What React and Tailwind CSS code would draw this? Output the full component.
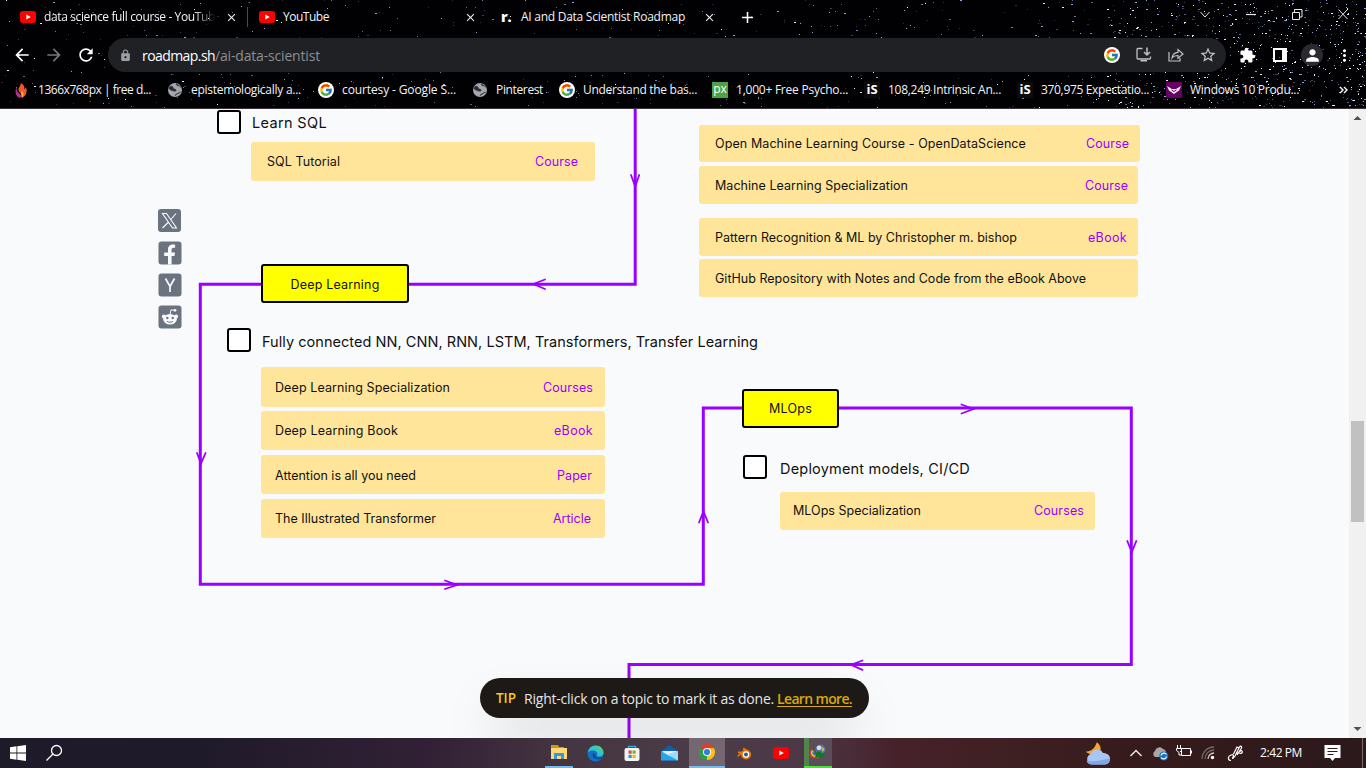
import React, { useLayoutEffect, useRef } from "react";
import {
  MdArrowBack, MdArrowForward, MdRefresh, MdLock, MdPublic, MdClose, MdAdd,
  MdStarBorder, MdExtension, MdPerson, MdMoreVert,
} from "react-icons/md";
import { FcGoogle } from "react-icons/fc";

/* Text run whose letter spacing is adjusted so that it spans `w` pixels. */
function Fit({ w, className = "", children }) {
  const ref = useRef(null);
  useLayoutEffect(() => {
    const el = ref.current;
    el.style.letterSpacing = "0px";
    const n = el.textContent.length;
    el.style.letterSpacing = `${(w - el.getBoundingClientRect().width) / n}px`;
  }, [w]);
  return <span ref={ref} className={`inline-block shrink-0 whitespace-pre ${className}`}>{children}</span>;
}

function makeStars() {
  let s = 90210;
  const rnd = () => {
    s = (s * 1664525 + 1013904223) % 4294967296;
    return s / 4294967296;
  };
  const tones = ["#e8eef8", "#8fa6d6", "#56678f", "#3a4258", "#2a2d3c", "#6f7fae", "#2d3142"];
  const out = [];
  for (let i = 0; i < 1900; i++) {
    const x = Math.floor(rnd() * 1366);
    const y = Math.floor(rnd() * 108);
    const keep = x < 900 ? 0.38 : 0.38 + ((x - 900) / 466) * 0.62;
    const t = rnd();
    const bright = rnd();
    if (t > keep) continue;
    const c = bright < (x > 1100 ? 0.3 : 0.08) ? tones[0] : tones[1 + Math.floor(rnd() * 6)];
    out.push({ x, y, w: rnd() > 0.82 ? 2 : 1, c });
  }
  for (let i = 0; i < 480; i++) {
    const x = 1366 - Math.floor(Math.pow(rnd(), 1.5) * 260);
    const y = Math.floor(rnd() * 108);
    out.push({ x, y, w: rnd() > 0.75 ? 2 : 1, c: tones[Math.floor(rnd() * 4)] });
  }
  return out;
}
const STARS = makeStars();

function Starfield() {
  return (
    <svg className="absolute inset-0" width="1366" height="108" shapeRendering="crispEdges">
      {STARS.map((p, i) => <rect key={i} x={p.x} y={p.y} width={p.w} height="1" fill={p.c} />)}
    </svg>
  );
}

function YouTubeIcon({ className = "" }) {
  return (
    <svg className={className} width="16" height="12" viewBox="0 0 16 12">
      <rect width="16" height="12" rx="3" fill="#f00" />
      <path d="M6.3 3.4v5.2L10.8 6z" fill="#fff" />
    </svg>
  );
}

const Google = () => (
  <span className="flex h-4 w-4 shrink-0 items-center justify-center rounded-full bg-white"><FcGoogle size={14} /></span>
);

const Globe = () => (
  <svg width="16" height="16" viewBox="0 0 16 16">
    <circle cx="8" cy="8" r="7" fill="#a4a8ad" />
    <path d="M3 4.500c2-1 3 .2 3.200 1.500.3 1.500 2 .8 2.800 1.800s-1 1.700-2.300 1.200S3 8 2 6.500zM9.500 1.600c-.5 1.500.5 2.400 2 2.200s1.500 1.700 3 1.500M8 13.700c.2-1.500 1.500-1.500 2.500-2.200s2-1.500 3.200-1.300" fill="#2a2b30" stroke="#2a2b30" strokeWidth=".7" />
  </svg>
);

function Bookmark({ icon, w, className, children }) {
  return (
    <div className={`flex shrink-0 items-center gap-2 ${className}`}>
      {icon}
      <Fit w={w}>{children}</Fit>
    </div>
  );
}

const IsIcon = () => (
  <span className="flex h-4 w-4 shrink-0 items-center justify-center bg-[#0c0c0c] font-['Open_Sans',sans-serif] text-[13px] font-bold text-white">iS</span>
);

function Browser() {
  return (
    <header className="relative h-[109px] overflow-hidden border-b border-[#3b3237] bg-[#010103] font-['Open_Sans','Noto_Sans',sans-serif] text-[12px] text-[#f2f2f4]">
      <Starfield />
      <div className="relative flex h-[34px] items-center">
        <YouTubeIcon className="ml-5 shrink-0" />
        <div className="ml-2 w-[172px] [mask-image:linear-gradient(90deg,#000_150px,transparent_172px)]">
          <Fit w={171}>data science full course - YouTub</Fit>
        </div>
        <MdClose size={13} className="ml-[9px] shrink-0" />
        <span className="ml-[9px] h-5 w-px bg-[#4a4b50]" />
        <YouTubeIcon className="ml-[11px] shrink-0" />
        <Fit w={46} className="ml-2">YouTube</Fit>
        <MdClose size={13} className="ml-[135px] shrink-0" />
        <span className="ml-[24px] w-[10px] text-[14px] leading-none font-extrabold text-white">r.</span>
        <Fit w={164} className="ml-[10px]">AI and Data Scientist Roadmap</Fit>
        <MdClose size={13} className="ml-[18px] shrink-0" />
        <MdAdd size={19} className="ml-[22px] shrink-0 text-white" />
        <div className="ml-auto flex h-[28px] items-center text-white">
          <svg className="mb-1.5" width="166" height="20" viewBox="0 0 166 20" fill="none" stroke="#e9e9ec" strokeWidth="1">
            <path d="M0.500 7.500l4.500 5 4.500-5" transform="translate(0 .5)" />
            <path d="M46 10.500h10" strokeWidth="1.200" />
            <path d="M92.500 8.500h7v7h-7zM94.500 8.500v-3h7.500v7.500h-2.500" />
            <path d="M138.500 5.500l9 9.500M147.500 5.500l-9 9.500" />
          </svg>
        </div>
      </div>
      <div className="relative flex h-[42px] items-center">
        <MdArrowBack size={20} className="ml-[12px] text-white" />
        <MdArrowForward size={20} className="ml-[12px] text-[#77787c]" />
        <MdRefresh size={20} className="ml-[12px] text-white" />
        <div className="ml-[12px] flex h-[34px] w-[1118px] items-center rounded-full bg-[#202124] text-[14px]">
          <MdLock size={13} className="ml-[11px] text-[#9aa0a6]" />
          <Fit w={73} className="ml-[10px] text-white">roadmap.sh</Fit>
          <Fit w={105} className="text-[#8b8e93]">/ai-data-scientist</Fit>
          <span className="ml-auto" />
          <Google />
          <svg className="ml-[15px]" width="18" height="18" viewBox="0 0 18 18" fill="none" stroke="#bdc1c6" strokeWidth="1.300">
            <path d="M7.500 2.500H3a1 1 0 0 0-1 1v8.500a1 1 0 0 0 1 1h11.500a1 1 0 0 0 1-1V10.500" />
            <path d="M12 1.500v7M9 6l3 3 3-3M5.500 14.700h6.500" strokeWidth="1.500" />
          </svg>
          <svg className="ml-[14px]" width="18" height="18" viewBox="0 0 18 18" fill="none" stroke="#bdc1c6" strokeWidth="1.200">
            <path d="M2 6v9h11v-3" />
            <path d="M5 12c.5-4 3-5.500 6-5.700V3.500l5 4.500-5 4.300V9.500c-2.500 0-4.500.5-6 2.500z" />
          </svg>
          <MdStarBorder size={18} className="mr-[9px] ml-[14px] text-[#c4c7ca]" />
        </div>
        <MdExtension size={17} className="ml-[13px] text-white" />
        <svg className="ml-[17px]" width="14" height="14"><path fillRule="evenodd" d="M0 0h14v14H0zM2 2v10h7V2z" fill="#fff" /></svg>
        <span className="ml-[14px] flex h-[22px] w-[22px] items-center justify-center rounded-full bg-[#2a2b31]"><MdPerson size={19} className="text-white" /></span>
        <MdMoreVert size={19} className="ml-[12px] text-white" />
      </div>
      <div className="relative flex h-[28px] items-center">
        <Bookmark w={113} className="ml-[13px]" icon={
          <svg width="17" height="17" viewBox="0 0 17 17">
            <path d="M8 1c3 2 4 4 3 6 1-.3 1.500-1 1.700-2 2 4 .8 9-3.700 11 1.500-3-1-4-3-6.500C4.500 7 7 5 8 1z" fill="#f0552b" />
            <path d="M4 5c-1 4 1 5 3 7s1 3 0 4C3 15 1 9 4 5z" fill="#b0308c" />
            <path d="M9 9c2 2 2 4 0 7-1.500-1.500 0-3-1-5z" fill="#ffb13b" />
          </svg>}>1366x768px | free d...</Bookmark>
        <Bookmark w={110} className="ml-4" icon={<Globe />}>epistemologically a...</Bookmark>
        <Bookmark w={114} className="ml-[17px]" icon={<Google />}>courtesy - Google S...</Bookmark>
        <Bookmark w={47} className="ml-4" icon={<Globe />}>Pinterest</Bookmark>
        <Bookmark w={114} className="ml-4" icon={<Google />}>Understand the bas...</Bookmark>
        <Bookmark w={112} className="ml-[15px]" icon={<span className="flex h-4 w-4 items-center justify-center bg-[#4ba346] pb-[2px] text-[12px] leading-none text-white">px</span>}>1,000+ Free Psycho...</Bookmark>
        <Bookmark w={113} className="ml-4" icon={<IsIcon />}>108,249 Intrinsic An...</Bookmark>
        <Bookmark w={108} className="ml-4" icon={<IsIcon />}>370,975 Expectatio...</Bookmark>
        <Bookmark w={109} className="ml-[17px]" icon={
          <svg width="16" height="16"><rect width="16" height="16" fill="#660066" /><path d="M1 4l5 3h4l5-3-2 4.500L8 12 3 8.500z" fill="#eee" /><path d="M5.500 8l2.500 1.500L10.500 8" stroke="#660066" fill="none" /></svg>
        }>Windows 10 Produ...</Bookmark>
        <svg className="ml-[40px]" width="9" height="8" fill="none" stroke="#fff" strokeWidth="1.400"><path d="M1 1l3 3-3 3M5 1l3 3-3 3" /></svg>
      </div>
    </header>
  );
}

function Resource({ className, title, w, kind, kw }) {
  return (
    <div className={`absolute flex items-center justify-between rounded-[3px] bg-[#ffe599] text-[12.5px] text-[#111] ${className}`}>
      <Fit w={w}>{title}</Fit>
      {kind && <Fit w={kw} className="text-[#9a00ff]">{kind}</Fit>}
    </div>
  );
}

function Topic({ className, w, children }) {
  return (
    <div className={`absolute flex items-center text-[14.5px] text-[#111] ${className}`}>
      <Fit w={w}>{children}</Fit>
    </div>
  );
}

const Checkbox = ({ className }) => (
  <span className={`absolute h-6 w-6 rounded-[3px] border-2 border-black bg-white ${className}`} />
);

const Node = ({ className, w, children }) => (
  <div className={`absolute flex items-center justify-center rounded-[3px] border-2 border-black bg-[#ffff00] text-[12.5px] text-[#111] ${className}`}>
    <Fit w={w}>{children}</Fit>
  </div>
);

function Roadmap() {
  return (
    <main className="relative h-[629px] w-[1349px] shrink-0 overflow-hidden bg-[#f9fafc] font-['Inter','Open_Sans',sans-serif]">
      <svg className="absolute inset-0" width="1349" height="629" viewBox="0 109 1349 629" fill="none" stroke="#9a00ff" strokeWidth="3">
        <path d="M635.200 109V284.200H200.300V584.300H703.300V408H1131.300V664.600H629V740" />
        <path strokeWidth="1.800" strokeLinecap="round" d="M631 175l4.200 11.500 4-11.500M545 279.500l-11.500 4.500 11.500 5M197 453l4 10.500 4.500-10.500M445 580.500l12 4.500-12 4M699 522.500l4.500-11 4.500 11M961.500 404.500l12 4.500-12 4.500M1127.300 541l4.500 11 4.500-11M862.500 660.500l-11.500 4.300 11.500 5" />
      </svg>

      <Checkbox className="top-[1px] left-[217px]" />
      <Topic w={75} className="top-[4px] left-[252px] h-5">Learn SQL</Topic>
      <Resource className="top-[33px] left-[251px] h-[39px] w-[344px] pt-0.5 pr-[17px] pl-4" title="SQL Tutorial" w={73} kind="Course" kw={43} />

      <Resource className="top-[16px] left-[699px] h-[37px] w-[441px] pt-0.5 pr-[11px] pl-4" title="Open Machine Learning Course - OpenDataScience" w={311} kind="Course" kw={43} />
      <Resource className="top-[57px] left-[699px] h-[38px] w-[439px] pt-0.5 pr-[10px] pl-4" title="Machine Learning Specialization" w={193} kind="Course" kw={43} />
      <Resource className="top-[109px] left-[699px] h-[38px] w-[439px] pt-0.5 pr-[11px] pl-4" title="Pattern Recognition & ML by Christopher m. bishop" w={302} kind="eBook" kw={39} />
      <Resource className="top-[150px] left-[699px] h-[38px] w-[439px] pt-0.5 pl-4" title="GitHub Repository with Notes and Code from the eBook Above" w={371} />

      <Node w={89} className="top-[155px] left-[261px] h-[39px] w-[148px] pt-[3px]">Deep Learning</Node>
      <Checkbox className="top-[219px] left-[227px]" />
      <Topic w={496} className="top-[223px] left-[262px] h-5">Fully connected NN, CNN, RNN, LSTM, Transformers, Transfer Learning</Topic>
      <Resource className="top-[258px] left-[261px] h-[40px] w-[344px] pt-0.5 pr-[12px] pl-[14px]" title="Deep Learning Specialization" w={175} kind="Courses" kw={50} />
      <Resource className="top-[302px] left-[261px] h-[39px] w-[344px] pt-0.5 pr-[12px] pl-[14px]" title="Deep Learning Book" w={123} kind="eBook" kw={39} />
      <Resource className="top-[346px] left-[261px] h-[39px] w-[344px] pt-[3px] pr-[13px] pl-[14px]" title="Attention is all you need" w={141} kind="Paper" kw={35} />
      <Resource className="top-[390px] left-[261px] h-[39px] w-[344px] pt-0.5 pr-[14px] pl-[14px]" title="The Illustrated Transformer" w={161} kind="Article" kw={38} />

      <Node w={43} className="top-[280px] left-[742px] h-[39px] w-[97px] pt-px">MLOps</Node>
      <Checkbox className="top-[346px] left-[743px]" />
      <Topic w={190} className="top-[350px] left-[780px] h-5">Deployment models, CI/CD</Topic>
      <Resource className="top-[383px] left-[780px] h-[38px] w-[315px] pr-[11px] pl-[13px]" title="MLOps Specialization" w={128} kind="Courses" kw={50} />

      <div className="absolute top-[100px] left-[158px] flex w-6 flex-col gap-[8px]">
        <svg width="23" height="24" viewBox="0 0 23 24"><rect width="23" height="23" rx="3" fill="#6b7280" /><path d="M4.500 4.500h4l10 14.500h-4zM18 4.500L12.500 11M10.500 13l-6 6" fill="none" stroke="#f9fafc" strokeWidth="1.100" /></svg>
        <svg width="24" height="24" viewBox="0 0 24 24"><rect x=".5" y=".5" width="23" height="23" rx="3" fill="#6b7280" /><path d="M10 23.500V15H6.200V11.500H10V8.500c0-3.500 2-5 4.800-5 1 0 1.800.1 2.300.2v3h-1.600c-1.400 0-1.900.8-1.900 2v2.800H17l-.5 3.500h-2.900v8.500z" fill="#f9fafc" /></svg>
        <svg width="24" height="24" viewBox="0 0 24 24"><rect x=".5" y=".5" width="23" height="23" rx="3" fill="#6b7280" /><path d="M7.500 5.500L12 13.500V19M16.500 5.500L12 13.500" fill="none" stroke="#f9fafc" strokeWidth="1.700" /></svg>
        <svg width="24" height="24" viewBox="0 0 24 24">
          <rect x=".5" y=".5" width="23" height="23" rx="3" fill="#6b7280" />
          <g fill="#f9fafc"><circle cx="5.800" cy="11.500" r="1.900" /><circle cx="18.200" cy="11.500" r="1.900" /><ellipse cx="12" cy="14.300" rx="6.800" ry="5.300" /><circle cx="17" cy="5.300" r="1.400" /></g>
          <path d="M12 9.500l1-4.700 3.500.6" fill="none" stroke="#f9fafc" />
          <circle cx="9.300" cy="13" r="1.200" fill="#6b7280" /><circle cx="14.700" cy="13" r="1.200" fill="#6b7280" />
          <path d="M9 16.300c1.500 1.200 4.500 1.200 6 0" fill="none" stroke="#6b7280" />
        </svg>
      </div>

      <div className="absolute top-[569px] left-[480px] flex h-10 w-[389px] items-center rounded-full bg-[#1c1917] pt-px pl-4 font-['Open_Sans','Noto_Sans',sans-serif] text-[14px] text-[#e5e5e5] shadow-[0_25px_50px_-12px_rgba(0,0,0,0.25)]">
        <Fit w={20} className="text-[13.5px] font-semibold text-[#facc15]">TIP</Fit>
        <Fit w={250} className="ml-2">Right-click on a topic to mark it as done.</Fit>
        <Fit w={75} className="ml-[3px] font-semibold text-[#dba909] underline underline-offset-2">Learn more.</Fit>
      </div>
    </main>
  );
}

function Scrollbar() {
  return (
    <div className="flex h-[629px] w-[17px] flex-col items-center bg-[#f1f1f1]">
      <svg width="17" height="17"><path d="M4.500 11L8.500 7l4 4z" fill="#505050" /></svg>
      <div className="mt-[295px] h-[101px] w-[13px] bg-[#c1c1c1]" />
      <svg className="mt-auto" width="17" height="17"><path d="M4.500 6l4 4 4-4z" fill="#505050" /></svg>
    </div>
  );
}

function Taskbar() {
  return (
    <footer className="flex h-[30px] items-center bg-[linear-gradient(90deg,#1e1b29_0px,#1f1a2a_200px,#332136_440px,#443541_560px,#4b3c49_700px,#4c3846_800px,#46212a_900px,#3f2023_1000px,#371b1c_1130px,#2b191b_1366px)] font-['Open_Sans','Noto_Sans',sans-serif] text-[12px] text-white">
      <svg className="ml-[10px]" width="16" height="16" fill="#fff"><path d="M0 2.200l6.500-.9v6.300H0zM7.300 1.200L16 0v7.600H7.300zM0 8.400h6.500v6.300L0 13.800zM7.300 8.400H16V16l-8.700-1.200z" /></svg>
      <svg className="ml-[19px]" width="18" height="18" fill="none" stroke="#fff" strokeWidth="1.300"><circle cx="11.500" cy="6.500" r="5" /><path d="M8 10L1.500 16.500" /></svg>
      <div className="ml-[482px] flex h-full items-center">
        <div className="flex h-full w-7 items-center justify-center border-b-2 border-[#76b9ed]">
          <svg width="16" height="14"><path d="M0 0h7l1 2h5v3H0z" fill="#d9930f" /><path d="M0 3h16v11H0z" fill="#fcd978" /><path d="M3 14V8h10v6h-3v-3H6v3z" fill="#3a96dd" /></svg>
        </div>
        <svg className="ml-[14px]" width="17" height="17" viewBox="0 0 17 17">
          <defs><linearGradient id="edge" x1="0" y1="1" x2="1" y2="0"><stop offset="0" stopColor="#1c9fe3" /><stop offset=".5" stopColor="#2cc3d5" /><stop offset="1" stopColor="#62d84e" /></linearGradient></defs>
          <circle cx="8.500" cy="8.500" r="8" fill="#1270c4" />
          <path d="M.6 8C1 3.500 4.500.5 8.500.5c5 0 8 3.500 8 7 0 3-2.500 4-4.500 4-1.800 0-2.500-.7-2-1.500C11 8 9.500 5.500 6.500 5.500S1 6.500.6 8z" fill="url(#edge)" />
          <path d="M6 8c-1.500 4 2 7 8 6l2-2c-3 1.500-8 1-8-2.500z" fill="#0c4a94" />
        </svg>
        <svg className="ml-[20px]" width="16" height="17"><path d="M4.500 4V1.500h7V4" fill="none" stroke="#35a9e0" strokeWidth="1.300" /><rect y="3" x=".5" width="15" height="13" rx="2" fill="#f2f2f2" /><path d="M4.500 5.500h3.200v3.200H4.500z" fill="#e0502d" /><path d="M8.500 5.500h3.200v3.200H8.500z" fill="#77b52a" /><path d="M4.500 9.800h3.200V13H4.500z" fill="#1c9de0" /><path d="M8.500 9.800h3.200V13H8.500z" fill="#f6b519" /></svg>
        <svg className="ml-[21px]" width="17" height="16"><path d="M0 6L8.500 0 17 6v9.500H0z" fill="#0f5fae" /><path d="M1.500 6h14v5h-14z" fill="#e8eef4" /><path d="M0 6l8.500 5L17 6v9.500H0z" fill="#27a4ea" /><path d="M17 6v9.500L6 9.500z" fill="#9bdcf9" /></svg>
        <div className="ml-[11px] flex h-full w-9 items-center justify-center border-b-2 border-[#76b9ed] bg-[#746772]">
          <svg width="16" height="16" viewBox="0 0 16 16">
            <path d="M8 8L1.070 4A8 8 0 0 1 14.930 4z" fill="#e33b2e" /><path d="M8 8L14.930 4A8 8 0 0 1 8 16z" fill="#fbc116" /><path d="M8 8V16A8 8 0 0 1 1.070 4z" fill="#25a34a" />
            <path d="M8 4h6.930L11.500 9z" fill="#fbc116" /><path d="M8 4H14.930A8 8 0 0 0 8 0z" fill="#e33b2e" />
            <circle cx="8" cy="8" r="4" fill="#fff" /><circle cx="8" cy="8" r="3.100" fill="#3479e4" />
          </svg>
        </div>
        <svg className="ml-[12px]" width="15" height="14"><path d="M1 5.500h7L5.500 3 7 1.500l7 6-1 1H4l-3 2.500-1-1 3-2.500H1z" fill="#ea7600" /><circle cx="9" cy="8.500" r="5" fill="#ea7600" /><circle cx="9" cy="8.500" r="3.200" fill="#fff" /><circle cx="9" cy="8.500" r="2" fill="#235c95" /></svg>
        <YouTubeIcon className="ml-[21px]" />
        <div className="ml-[15px] flex h-full w-7 items-center border-b-2 border-[#4be03a] bg-[#5c4e58]">
          <span className="h-full w-[5px] shrink-0 bg-[#51854d]" />
          <svg width="18" height="16" viewBox="0 0 18 16" fill="none">
            <path d="M2.500 6C-1 11 4 15.500 10 13" stroke="#d93a2b" strokeWidth="1.600" />
            <path d="M3.700 6.500C1 11 5 13.500 10 11.500" stroke="#e8d83a" strokeWidth="1.600" />
            <path d="M5 7c-2 3 .5 5 4.500 3.500" stroke="#3b7fe0" strokeWidth="1.600" />
            <circle cx="11.500" cy="5.500" r="5" fill="#5572a3" /><circle cx="10" cy="3.800" r="2.400" fill="#d5deea" /><path d="M12 3c2 0 3 1 3.500 3l-2 2z" fill="#c9b45c" />
            <path d="M8 7.500h4v2l5-.5-5 5.500-1-2-5 1z" fill="#0b7a20" />
          </svg>
        </div>
      </div>
      <svg className="ml-[253px]" width="26" height="24"><path d="M11 1c4 2 6 6 4 10l-8 3-6-2c5-1 9-4 10-11z" fill="#f3a531" transform="rotate(8 9 7)" /><path d="M6 23.500a5.500 5.500 0 0 1 0-10.500 6.500 6.500 0 0 1 12-1c4 0 7.500 2.500 7 6.500s-3 5-6 5z" fill="#a9c5f3" /><path d="M6 23.500a5 5 0 0 1-4.500-4c6 2 15 0 23-2 .8 4-2 6-5.500 6z" fill="#7ea6e8" /></svg>
      <svg className="ml-[19px]" width="12" height="8" fill="none" stroke="#eee" strokeWidth="1.400"><path d="M.5 7L6 1.500 11.500 7" /></svg>
      <svg className="ml-[10px]" width="17" height="15"><path d="M3 11a3.500 3.500 0 0 1 0-6 4.500 4.500 0 0 1 8-2 4 4 0 0 1 3 4v4z" fill="#aaa5a5" /><circle cx="11.800" cy="10" r="4.500" fill="#1473c4" /><path d="M9 9.500a3 3 0 0 1 5.500-1M14.500 10.500a3 3 0 0 1-5.500 1" fill="none" stroke="#fff" strokeWidth="1.200" /></svg>
      <svg className="mb-1 ml-[7px]" width="16" height="12" fill="none" stroke="#fff"><path d="M5.500 3.500h9v7h-9zM15.500 5.500v3M1.500 0v3M4.500 0v3M.5 3.500h5v2l-1.500 1.500M.5 3.500v2L3 7.500v2.500h2" /></svg>
      <svg className="ml-[9px]" width="14" height="14" fill="none"><path d="M1 13A12 12 0 0 1 13 1M4 13a9 9 0 0 1 9-9" stroke="#766a6b" strokeWidth="1.300" /><path d="M7 13a6 6 0 0 1 6-6" stroke="#c9c3c3" strokeWidth="1.300" /><circle cx="11.500" cy="11.500" r="1.700" fill="#fff" /></svg>
      <svg className="ml-[12px]" width="18" height="16" fill="none" stroke="#fff" strokeWidth="1.200"><path d="M4 15.500c-3 0-4-4 0-5.500 2-1 3 0 2 2s0 2 2-1l4.500-9c1-1.500 2.500-.5 2 1L10 10M6.500 9L10 2l2 1M10 9c3-3 4-4 5-3 1 2-1 3-3 2" /></svg>
      <Fit w={42} className="ml-[15px]">2:42 PM</Fit>
      <svg className="ml-[22px]" width="17" height="16"><path d="M.5 0h16v13H11l-2.500 3L6 13H.5z" fill="#fff" /><path d="M3.500 3.500h10M3.500 6.500h10M3.500 9.500h6" stroke="#2f1c1e" /></svg>
      <span className="mr-[3px] ml-auto h-full w-px bg-[#7b6d6e]" />
    </footer>
  );
}

export default function App() {
  return (
    <div className="flex h-[768px] w-[1366px] flex-col overflow-hidden">
      <Browser />
      <div className="flex">
        <Roadmap />
        <Scrollbar />
      </div>
      <Taskbar />
    </div>
  );
}
